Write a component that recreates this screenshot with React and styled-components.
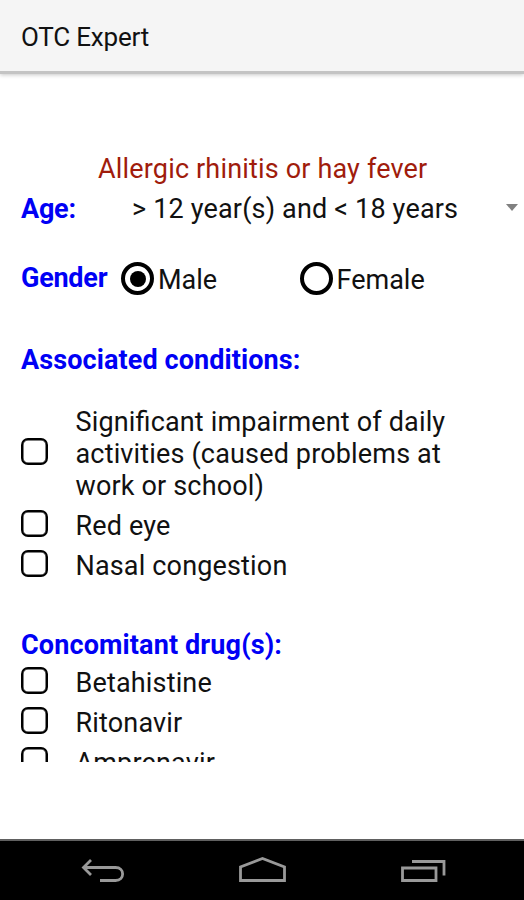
import React, { useState } from 'react';
import styled, { createGlobalStyle } from 'styled-components';

const GlobalStyle = createGlobalStyle`
  * {
    box-sizing: border-box;
  }

  body {
    margin: 0;
    background: #ffffff;
    font-family: Roboto, 'Noto Sans', sans-serif;
  }
`;

const Screen = styled.div`
  display: flex;
  flex-direction: column;
  width: 524px;
  height: 900px;
  overflow: hidden;
  color: #111111;
  font-size: 27px;
  line-height: 32px;
`;

const AppBar = styled.header`
  display: flex;
  align-items: center;
  flex: none;
  height: 74px;
  padding: 3px 22px 1px 21px;
  background: #f5f5f5;
  border-bottom: 3px solid #c4c4c4;
  box-shadow: 0 1px 4px rgba(0, 0, 0, 0.22);
`;

const AppTitle = styled.h1`
  margin: 0;
  font-size: 26px;
  font-weight: 400;
`;

const Form = styled.main`
  flex: none;
  height: 688px;
  padding: 79px 0 0 21px;
  overflow: hidden;
`;

const Text = styled.span`
  display: inline-block;
  white-space: nowrap;
  letter-spacing: ${props => props.$spacing || 0}px;
  font-feature-settings: 'liga' 1;
`;

const Condition = styled.h2`
  margin: 0;
  padding-left: 77px;
  font-size: 27px;
  font-weight: 400;
  color: #a01c0c;
`;

const Label = styled.span`
  width: ${props => props.$width}px;
  font-weight: 700;
  letter-spacing: -0.25px;
  color: #0000f5;
`;

const AgeRow = styled.div`
  display: flex;
  margin-top: 8px;
`;

const AgeSelect = styled.div`
  display: flex;
  align-items: center;
  justify-content: space-between;
  flex: 1;
  padding-right: 6px;
`;

const Caret = styled.span`
  margin-top: -3px;
  border: 6px solid transparent;
  border-top: 7px solid #808080;
  border-bottom: 0;
`;

const GenderRow = styled.div`
  display: flex;
  align-items: flex-start;
  margin-top: 37px;
`;

const RadioOption = styled.label`
  display: flex;
  width: 178.5px;
`;

const Radio = styled.span`
  display: flex;
  align-items: center;
  justify-content: center;
  flex: none;
  width: 33px;
  height: 33px;
  margin-right: 4px;
  border: 4px solid #000000;
  border-radius: 50%;

  &::after {
    content: '';
    width: 16px;
    height: 16px;
    border-radius: 50%;
    background: ${props => (props.$checked ? '#000000' : 'transparent')};
  }
`;

const RadioText = styled(Text)`
  padding-top: 2px;
`;

const SectionTitle = styled.h3`
  margin: ${props => props.$top}px 0 ${props => props.$bottom}px;
  font-size: 27px;
  font-weight: 700;
  color: #0000f5;
`;

const CheckRow = styled.label`
  display: flex;
  align-items: center;
  padding: 4px 0;
`;

const Box = styled.span`
  flex: none;
  width: 27px;
  height: 27px;
  margin: 0 27.5px 5px 0;
  border: 2px solid #000000;
  border-radius: 7px;
  box-shadow: inset 0 0 0 0.5px #000000;
  background: ${props => (props.$checked ? '#111111' : 'transparent')};
`;

const Lines = styled.span`
  display: flex;
  flex-direction: column;
  align-items: flex-start;
`;

const NavBar = styled.nav`
  display: flex;
  align-items: center;
  justify-content: space-between;
  flex: none;
  height: 61px;
  margin-top: auto;
  padding: 1px 77px 0 79px;
  border-top: 2px solid #606060;
  background: #000000;
`;

const NavIcon = styled.svg`
  width: 48px;
  height: 32px;
  fill: none;
  stroke: #999999;
  stroke-width: 2.8;
`;

const conditions = [
  {
    id: 'impairment',
    lines: [
      'Significant impairment of daily',
      'activities (caused problems at',
      'work or school)'
    ]
  },
  { id: 'red-eye', lines: ['Red eye'] },
  { id: 'congestion', lines: ['Nasal congestion'] }
];

const drugs = [
  { id: 'betahistine', lines: ['Betahistine'] },
  { id: 'ritonavir', lines: ['Ritonavir'] },
  { id: 'amprenavir', lines: ['Amprenavir'] }
];

const CheckList = props => {
  return (
    <div>
      {props.items.map(item => (
        <CheckRow key={item.id} onClick={() => props.onToggle(item.id)}>
          <Box $checked={props.selected.includes(item.id)} />
          <Lines>
            {item.lines.map(line => (
              <Text key={line} $spacing={0.16}>
                {line}
              </Text>
            ))}
          </Lines>
        </CheckRow>
      ))}
    </div>
  );
};

const App = () => {
  const [gender, setGender] = useState('Male');
  const [selected, setSelected] = useState([]);

  const toggle = id =>
    setSelected(
      selected.includes(id) ? selected.filter(s => s !== id) : [...selected, id]
    );

  return (
    <Screen>
      <GlobalStyle />
      <AppBar>
        <AppTitle>
          <Text $spacing={-0.2}>OTC Expert</Text>
        </AppTitle>
      </AppBar>
      <Form>
        <Condition>
          <Text $spacing={0.17}>Allergic rhinitis or hay fever</Text>
        </Condition>
        <AgeRow>
          <Label $width={111}>Age:</Label>
          <AgeSelect>
            <Text $spacing={0.17}>&gt; 12 year(s) and &lt; 18 years</Text>
            <Caret />
          </AgeSelect>
        </AgeRow>
        <GenderRow>
          <Label $width={100}>Gender</Label>
          {['Male', 'Female'].map(g => (
            <RadioOption key={g} onClick={() => setGender(g)}>
              <Radio $checked={gender === g} />
              <RadioText>{g}</RadioText>
            </RadioOption>
          ))}
        </GenderRow>
        <SectionTitle $top={48} $bottom={26}>
          <Text $spacing={0.1}>Associated conditions:</Text>
        </SectionTitle>
        <CheckList items={conditions} selected={selected} onToggle={toggle} />
        <SectionTitle $top={43} $bottom={2}>
          <Text $spacing={0.13}>Concomitant drug(s):</Text>
        </SectionTitle>
        <CheckList items={drugs} selected={selected} onToggle={toggle} />
      </Form>
      <NavBar>
        <NavIcon viewBox="0 0 48 32">
          <path d="M12 5 L4.5 12.500 L12 20 M4.5 12.500 H36.500 C46 12.500 46 25.500 36.500 25.500 H21" />
        </NavIcon>
        <NavIcon viewBox="0 0 48 32">
          <path d="M1.500 25.500 V12 L23.500 3.500 L45.500 12 V25.500 Z" />
        </NavIcon>
        <NavIcon viewBox="0 0 48 32">
          <path d="M3.500 13 H37 V25.500 H3.500 Z M13 6.500 H45 V20.500" />
        </NavIcon>
      </NavBar>
    </Screen>
  );
};

export default App;
